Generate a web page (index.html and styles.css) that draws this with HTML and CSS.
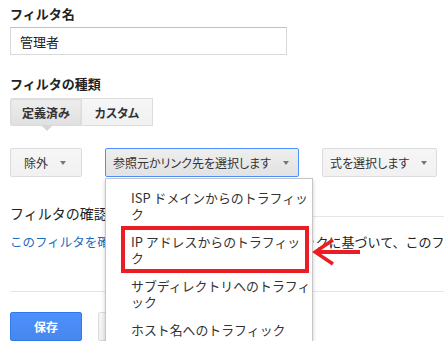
FILE: index.html
```html
<!DOCTYPE html>
<html lang="ja">
<head>
  <meta charset="UTF-8">
  <meta name="viewport" content="width=device-width, initial-scale=1.0">
  <title>フィルタを追加</title>
  <link rel="stylesheet" href="styles.css">
</head>
<body>
  <main class="filter-form">
    <label class="field-label" for="filterName">フィルタ名</label>
    <input class="text-input" id="filterName" type="text" value="管理者">

    <div class="field-label label-gap">フィルタの種類</div>
    <div class="segmented">
      <button class="seg seg-active">定義済み</button>
      <button class="seg">カスタム</button>
    </div>

    <div class="select-row">
      <div class="select-wrap">
        <button class="dropdown dropdown-short">除外<span class="caret"></span></button>
      </div>
      <div class="select-wrap">
        <button class="dropdown dropdown-focus">参照元かリンク先を選択します<span class="caret"></span></button>
        <ul class="menu">
          <li>ISP ドメインからのトラフィック</li>
          <li class="menu-marked">IP アドレスからのトラフィック
            <svg class="callout-arrow" width="50" height="28" viewBox="0 0 50 28">
              <path d="M4 14 H48" stroke="#ec1c24" stroke-width="4" fill="none"/>
              <path d="M21 2 L3 14 L21 26" stroke="#ec1c24" stroke-width="3.5" fill="none"/>
            </svg>
          </li>
          <li>サブディレクトリへのトラフィック</li>
          <li>ホスト名へのトラフィック</li>
        </ul>
      </div>
      <div class="select-wrap">
        <button class="dropdown">式を選択します<span class="caret"></span></button>
      </div>
    </div>

    <div class="verify-head">
      <h3>フィルタの確認</h3>
      <span class="rule"></span>
    </div>
    <p class="verify-text"><a href="#">このフィルタを確認します</a>（過去 7 日間のトラフィックに基づいて、このフィルタの効果を確認）</p>

    <hr class="divider">

    <div class="actions">
      <button class="btn btn-primary">保存</button>
      <button class="btn btn-cancel">キャンセル</button>
    </div>
  </main>
</body>
</html>
```

FILE: styles.css
```css
html, body {
  overflow: hidden;
}

body {
  margin: 0;
  padding: 0;
  background: #fff;
  color: #222;
  font-family: "Noto Sans CJK JP", sans-serif;
  font-size: 13px;
}

.filter-form {
  padding: 5px 0 0 10px;
}

.field-label {
  display: block;
  font-weight: bold;
  font-size: 13px;
  line-height: 18px;
  margin-bottom: 4px;
}

.label-gap {
  margin-top: 20px;
  margin-bottom: 5px;
}

.text-input {
  display: block;
  box-sizing: border-box;
  width: 277px;
  height: 28px;
  margin: 0;
  padding: 0 9px;
  border: 1px solid #d9d9d9;
  border-top-color: #c0c0c0;
  font-family: inherit;
  font-size: 13px;
  color: #222;
  outline: none;
}

.segmented {
  display: flex;
}

.seg {
  box-sizing: border-box;
  height: 28px;
  margin: 0;
  padding: 0;
  border: 1px solid #dcdcdc;
  background: linear-gradient(#f6f6f6, #f1f1f1);
  color: #333;
  font-family: inherit;
  font-size: 12px;
  font-weight: bold;
  font-feature-settings: "palt";
  width: 71px;
  border-left: none;
  cursor: pointer;
}

.seg-active {
  position: relative;
  width: 72px;
  border-left: 1px solid #dcdcdc;
  border-radius: 2px 0 0 2px;
  background: linear-gradient(#eeeeee, #e0e0e0);
  box-shadow: inset 0 1px 2px rgba(0, 0, 0, 0.08);
}

.seg-active::after {
  content: "";
  position: absolute;
  left: 30px;
  top: 100%;
  border-top: 6px solid #d6d6d6;
  border-left: 6px solid transparent;
  border-right: 6px solid transparent;
}

.select-row {
  display: flex;
  gap: 23px;
  margin-top: 22px;
}

.select-wrap {
  position: relative;
}

.dropdown {
  display: flex;
  align-items: center;
  justify-content: center;
  box-sizing: border-box;
  height: 29px;
  margin: 0;
  padding: 0 9px 0 7px;
  border: 1px solid #dcdcdc;
  border-radius: 2px;
  background: linear-gradient(#f6f6f6, #f1f1f1);
  color: #333;
  font-family: inherit;
  font-size: 12px;
  font-feature-settings: "palt";
  white-space: nowrap;
  cursor: pointer;
}

.dropdown-short {
  min-width: 72px;
}

.dropdown-focus {
  border-color: #4d90fe;
  background: linear-gradient(#eeeeee, #e2e2e2);
}

.caret {
  margin-left: 12px;
  border-top: 4px solid #777;
  border-left: 3.5px solid transparent;
  border-right: 3.5px solid transparent;
}

.menu {
  position: absolute;
  z-index: 2;
  left: 0;
  top: calc(100% + 1px);
  box-sizing: border-box;
  width: 208px;
  margin: 0;
  padding: 5px 0 1px;
  list-style: none;
  background: #fff;
  border: 1px solid #c6c6c6;
  box-shadow: 0 2px 4px rgba(0, 0, 0, 0.2);
  color: #333;
  font-size: 12.9px;
  line-height: 16px;
}

.menu li {
  padding: 6px 0 6px 25px;
  line-break: loose;
}

.menu-marked {
  position: relative;
}

.menu-marked::after {
  content: "";
  position: absolute;
  left: 15px;
  right: 3px;
  top: -2px;
  bottom: -1px;
  border: 4px solid #ec1c24;
}

.callout-arrow {
  position: absolute;
  left: 100%;
  top: 10px;
}

.verify-head {
  display: flex;
  align-items: center;
  margin-top: 26px;
}

.verify-head h3 {
  margin: 0;
  font-size: 14px;
  font-weight: normal;
  line-height: 20px;
  color: #222;
}

.rule {
  flex: 1;
  height: 1px;
  margin-top: 6px;
  margin-left: 10px;
  background: #e5e5e5;
}

.verify-text {
  margin: 10px 0 0;
  font-size: 13px;
  line-height: 18px;
  white-space: nowrap;
  color: #222;
}

.verify-text a {
  font-size: 12.5px;
  color: #1a6bbf;
  text-decoration: none;
}

.divider {
  margin: 40px 0 0;
  border: none;
  border-top: 1px solid #e5e5e5;
}

.actions {
  display: flex;
  gap: 16px;
  margin-top: 20px;
}

.btn {
  box-sizing: border-box;
  height: 29px;
  min-width: 72px;
  padding: 0 12px;
  border: 1px solid #dcdcdc;
  border-radius: 2px;
  background: linear-gradient(#f6f6f6, #f1f1f1);
  color: #444;
  font-family: inherit;
  font-size: 12px;
  font-weight: bold;
  cursor: pointer;
}

.btn-cancel {
  padding-left: 16px;
}

.btn-primary {
  border-color: #3079ed;
  background: linear-gradient(#4d90fe, #4787ed);
  color: #fff;
}
```
